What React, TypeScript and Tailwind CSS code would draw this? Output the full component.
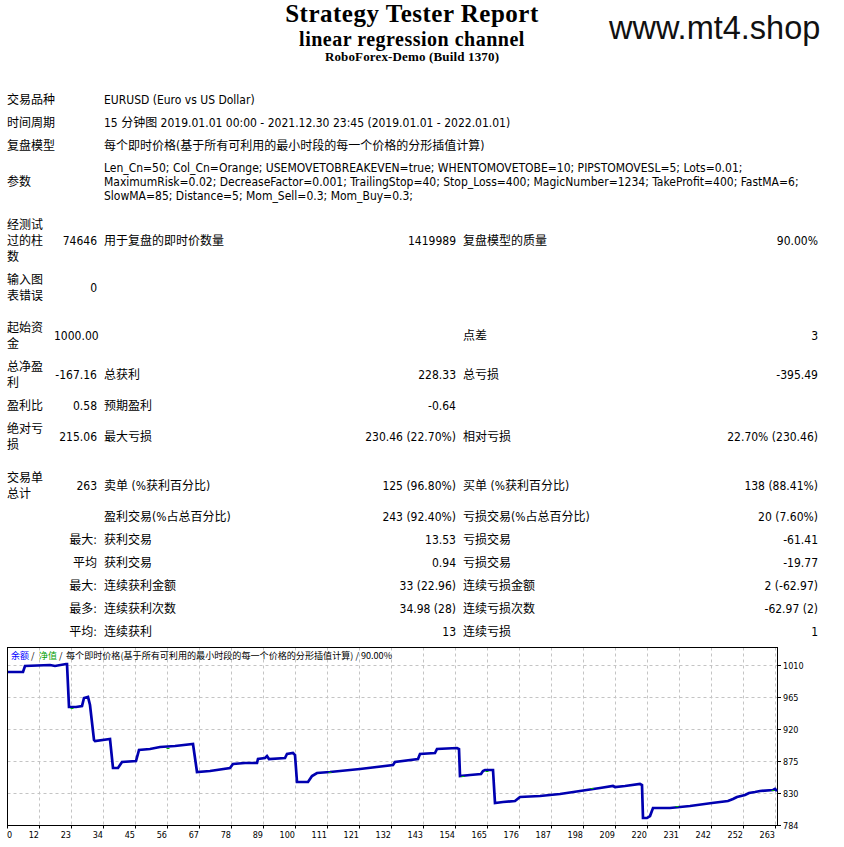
import React from "react";

const balance: [number, number][] = [
  [8, 672], [23, 672], [25, 666], [50, 665], [55, 666], [66, 664], [67, 664], [69, 707], [76, 707], [82, 706],
  [84, 698], [88, 697], [90, 705], [94, 740], [95, 741], [110, 739], [113, 768], [118, 768], [122, 762],
  [136, 761], [139, 750], [150, 749], [160, 747], [175, 746], [193, 744], [197, 772], [210, 771], [230, 768],
  [233, 764], [245, 763], [257, 763], [258, 759], [265, 758], [267, 756], [269, 759], [285, 758], [287, 754],
  [293, 753], [295, 755], [297, 782], [308, 782], [312, 776], [317, 773], [330, 772], [360, 769], [393, 765],
  [395, 762], [418, 759], [420, 754], [435, 753], [437, 749], [457, 748], [459, 749], [460, 776], [470, 775],
  [481, 774], [483, 771], [485, 770], [493, 770], [495, 803], [503, 802], [515, 801], [520, 797], [540, 796],
  [560, 794], [580, 791], [600, 788], [613, 786], [615, 787], [625, 786], [640, 784], [642, 785], [643, 818],
  [647, 818], [650, 816], [653, 808], [670, 808], [690, 806], [712, 803], [728, 801], [733, 799], [737, 797],
  [745, 795], [749, 793], [755, 792], [760, 791], [773, 790], [775, 789], [777, 791],
];

const greens: [number, number][] = [
  [72, 708], [168, 748], [330, 772], [463, 776], [487, 771], [592, 788], [677, 806], [773, 790],
];

const xLabels = ["0", "12", "23", "34", "45", "56", "67", "78", "89", "100", "111", "121", "132", "143", "154", "165", "176", "187", "198", "209", "220", "231", "242", "252", "263"];
const yLevels: [string, number][] = [["1010", 665.5], ["965", 697.5], ["920", 729.5], ["875", 761.5], ["830", 793.5], ["784", 825.5]];

const SANS = "'DejaVu Sans Condensed','Liberation Sans','Noto Sans CJK SC',sans-serif";

function Chart() {
  const left = 7.5;
  const right = 777.5;
  const top = 647.5;
  const bottom = 825.5;
  return (
    <svg width={844} height={204} viewBox="0 643 844 204" className="block">
      <rect x={0} y={643} width={844} height={204} fill="#ffffff" />
      {xLabels.map((_, i) => {
        const x = 7.5 + 32 * i;
        if (i === 0) return null;
        return <line key={"v" + i} x1={x} y1={top} x2={x} y2={bottom} stroke="#c4c4c4" strokeDasharray="3 3" />;
      })}
      {yLevels.slice(0, 5).map(([l, y]) => (
        <line key={"h" + l} x1={left} y1={y} x2={right} y2={y} stroke="#c4c4c4" strokeDasharray="3 3" />
      ))}
      <rect x={left} y={top} width={right - left} height={bottom - top} fill="none" stroke="#000" strokeWidth={1} />
      {yLevels.map(([l, y]) => (
        <g key={"yl" + l}>
          <line x1={right} y1={y} x2={right + 3.5} y2={y} stroke="#000" />
          <text x={783} y={y + 3.3} fontSize={9} fontFamily={SANS} fill="#000">{l}</text>
        </g>
      ))}
      {xLabels.map((l, i) => {
        const x = 7.5 + 32 * i;
        return (
          <g key={"xl" + i}>
            <line x1={x} y1={bottom} x2={x} y2={bottom + 3} stroke="#000" />
            <text x={i === 0 ? 7 : x - 0.5} y={837.5} fontSize={9} fontFamily={SANS} textAnchor={i === 0 ? "start" : "end"} fill="#000">{l}</text>
          </g>
        );
      })}
      <polyline
        points={balance.map(([x, y]) => `${x},${y}`).join(" ")}
        fill="none"
        stroke="#0000b0"
        strokeWidth={2.7}
        strokeLinejoin="miter"
      />
      {greens.map(([x, y], i) => (
        <line key={"g" + i} x1={x - 1.5} y1={y + 0.5} x2={x + 1.5} y2={y + 0.5} stroke="#00b000" strokeWidth={1} />
      ))}
      <text y={658.5} fontSize={9} fontFamily="'Noto Sans CJK SC','Liberation Sans',sans-serif">
        <tspan x={11} fill="#0000ff">余额</tspan>
        <tspan x={31} fill="#000">/</tspan>
        <tspan x={39} fill="#00a000">净值</tspan>
        <tspan x={59} fill="#000">/</tspan>
        <tspan x={66} fill="#000" textLength={326} lengthAdjust="spacingAndGlyphs">
          每个即时价格(基于所有可利用的最小时段的每一个价格的分形插值计算) / 90.00%
        </tspan>
      </text>
    </svg>
  );
}

type Cell = React.ReactNode;

function Row({ c, labelSpan }: { c: Cell[]; labelSpan?: boolean }) {
  const align = ["text-left", "text-right", "text-left", "text-right", "text-left", "text-right"];
  if (labelSpan) {
    return (
      <>
        <div className="col-span-2 py-[3px] text-right">{c[0]}</div>
        {c.slice(2).map((x, i) => (
          <div key={i} className={"py-[3px] whitespace-nowrap " + align[i + 2]}>{x}</div>
        ))}
      </>
    );
  }
  return (
    <>
      {c.map((x, i) => (
        <div key={i} className={"py-[3px] " + (i === 0 ? "" : "whitespace-nowrap ") + align[i]}>{x}</div>
      ))}
    </>
  );
}

function TopRow({ label, children, tight }: { label: string; children: React.ReactNode; tight?: boolean }) {
  return (
    <>
      <div className="col-span-2 py-[3px]">{label}</div>
      <div className={"col-span-4 py-[3px] whitespace-nowrap " + (tight ? "leading-[14px]" : "")}>{children}</div>
    </>
  );
}

export default function App() {
  return (
    <div className="relative w-[844px] h-[847px] overflow-hidden bg-white text-black">
      <div className="h-[89px] w-[824px] text-center [font-family:'Liberation_Serif','Times_New_Roman',serif] font-bold">
        <div className="text-[25px] leading-[27.8px] tracking-[0.5px]">Strategy Tester Report</div>
        <div className="text-[20px] leading-[22.2px] tracking-[0.5px]">linear regression channel</div>
        <div className="text-[13px] leading-[14.5px] tracking-[0.15px]">RoboForex-Demo (Build 1370)</div>
      </div>
      <div className="absolute left-[609px] top-[10px] text-[32.5px] leading-[36px] text-[#111] [font-family:'Liberation_Sans',Arial,sans-serif]">
        www.mt4.shop
      </div>

      <div className="ml-[7px] grid grid-cols-[40px_43px_250px_95px_255px_93px] gap-x-[7px] gap-y-px items-center text-[12px] leading-[16px] [font-family:'DejaVu_Sans_Condensed','Liberation_Sans','Noto_Sans_CJK_SC',sans-serif]">
        <TopRow label="交易品种">EURUSD (Euro vs US Dollar)</TopRow>
        <TopRow label="时间周期">15 分钟图 2019.01.01 00:00 - 2021.12.30 23:45 (2019.01.01 - 2022.01.01)</TopRow>
        <TopRow label="复盘模型">每个即时价格(基于所有可利用的最小时段的每一个价格的分形插值计算)</TopRow>
        <TopRow label="参数" tight>
          <div>Len_Cn=50; Col_Cn=Orange; USEMOVETOBREAKEVEN=true; WHENTOMOVETOBE=10; PIPSTOMOVESL=5; Lots=0.01;</div>
          <div>MaximumRisk=0.02; DecreaseFactor=0.001; TrailingStop=40; Stop_Loss=400; MagicNumber=1234; TakeProfit=400; FastMA=6;</div>
          <div>SlowMA=85; Distance=5; Mom_Sell=0.3; Mom_Buy=0.3;</div>
        </TopRow>
        <div className="col-span-6 h-[6px]" />
        <Row c={["经测试过的柱数", "74646", "用于复盘的即时价数量", "1419989", "复盘模型的质量", "90.00%"]} />
        <Row c={["输入图表错误", "0", "", "", "", ""]} />
        <div className="col-span-6 h-[8px]" />
        <Row c={["起始资金", "1000.00", "", "", "点差", "3"]} />
        <Row c={["总净盈利", "-167.16", "总获利", "228.33", "总亏损", "-395.49"]} />
        <Row c={["盈利比", "0.58", "预期盈利", "-0.64", "", ""]} />
        <Row c={["绝对亏损", "215.06", "最大亏损", "230.46 (22.70%)", "相对亏损", "22.70% (230.46)"]} />
        <div className="col-span-6 h-[9px]" />
        <Row c={["交易单总计", "263", "卖单 (%获利百分比)", "125 (96.80%)", "买单 (%获利百分比)", "138 (88.41%)"]} />
        <Row labelSpan c={["", "", "盈利交易(%占总百分比)", "243 (92.40%)", "亏损交易(%占总百分比)", "20 (7.60%)"]} />
        <Row labelSpan c={["最大:", "", "获利交易", "13.53", "亏损交易", "-61.41"]} />
        <Row labelSpan c={["平均", "", "获利交易", "0.94", "亏损交易", "-19.77"]} />
        <Row labelSpan c={["最大:", "", "连续获利金额", "33 (22.96)", "连续亏损金额", "2 (-62.97)"]} />
        <Row labelSpan c={["最多:", "", "连续获利次数", "34.98 (28)", "连续亏损次数", "-62.97 (2)"]} />
        <Row labelSpan c={["平均:", "", "连续获利", "13", "连续亏损", "1"]} />
      </div>

      <Chart />
    </div>
  );
}
